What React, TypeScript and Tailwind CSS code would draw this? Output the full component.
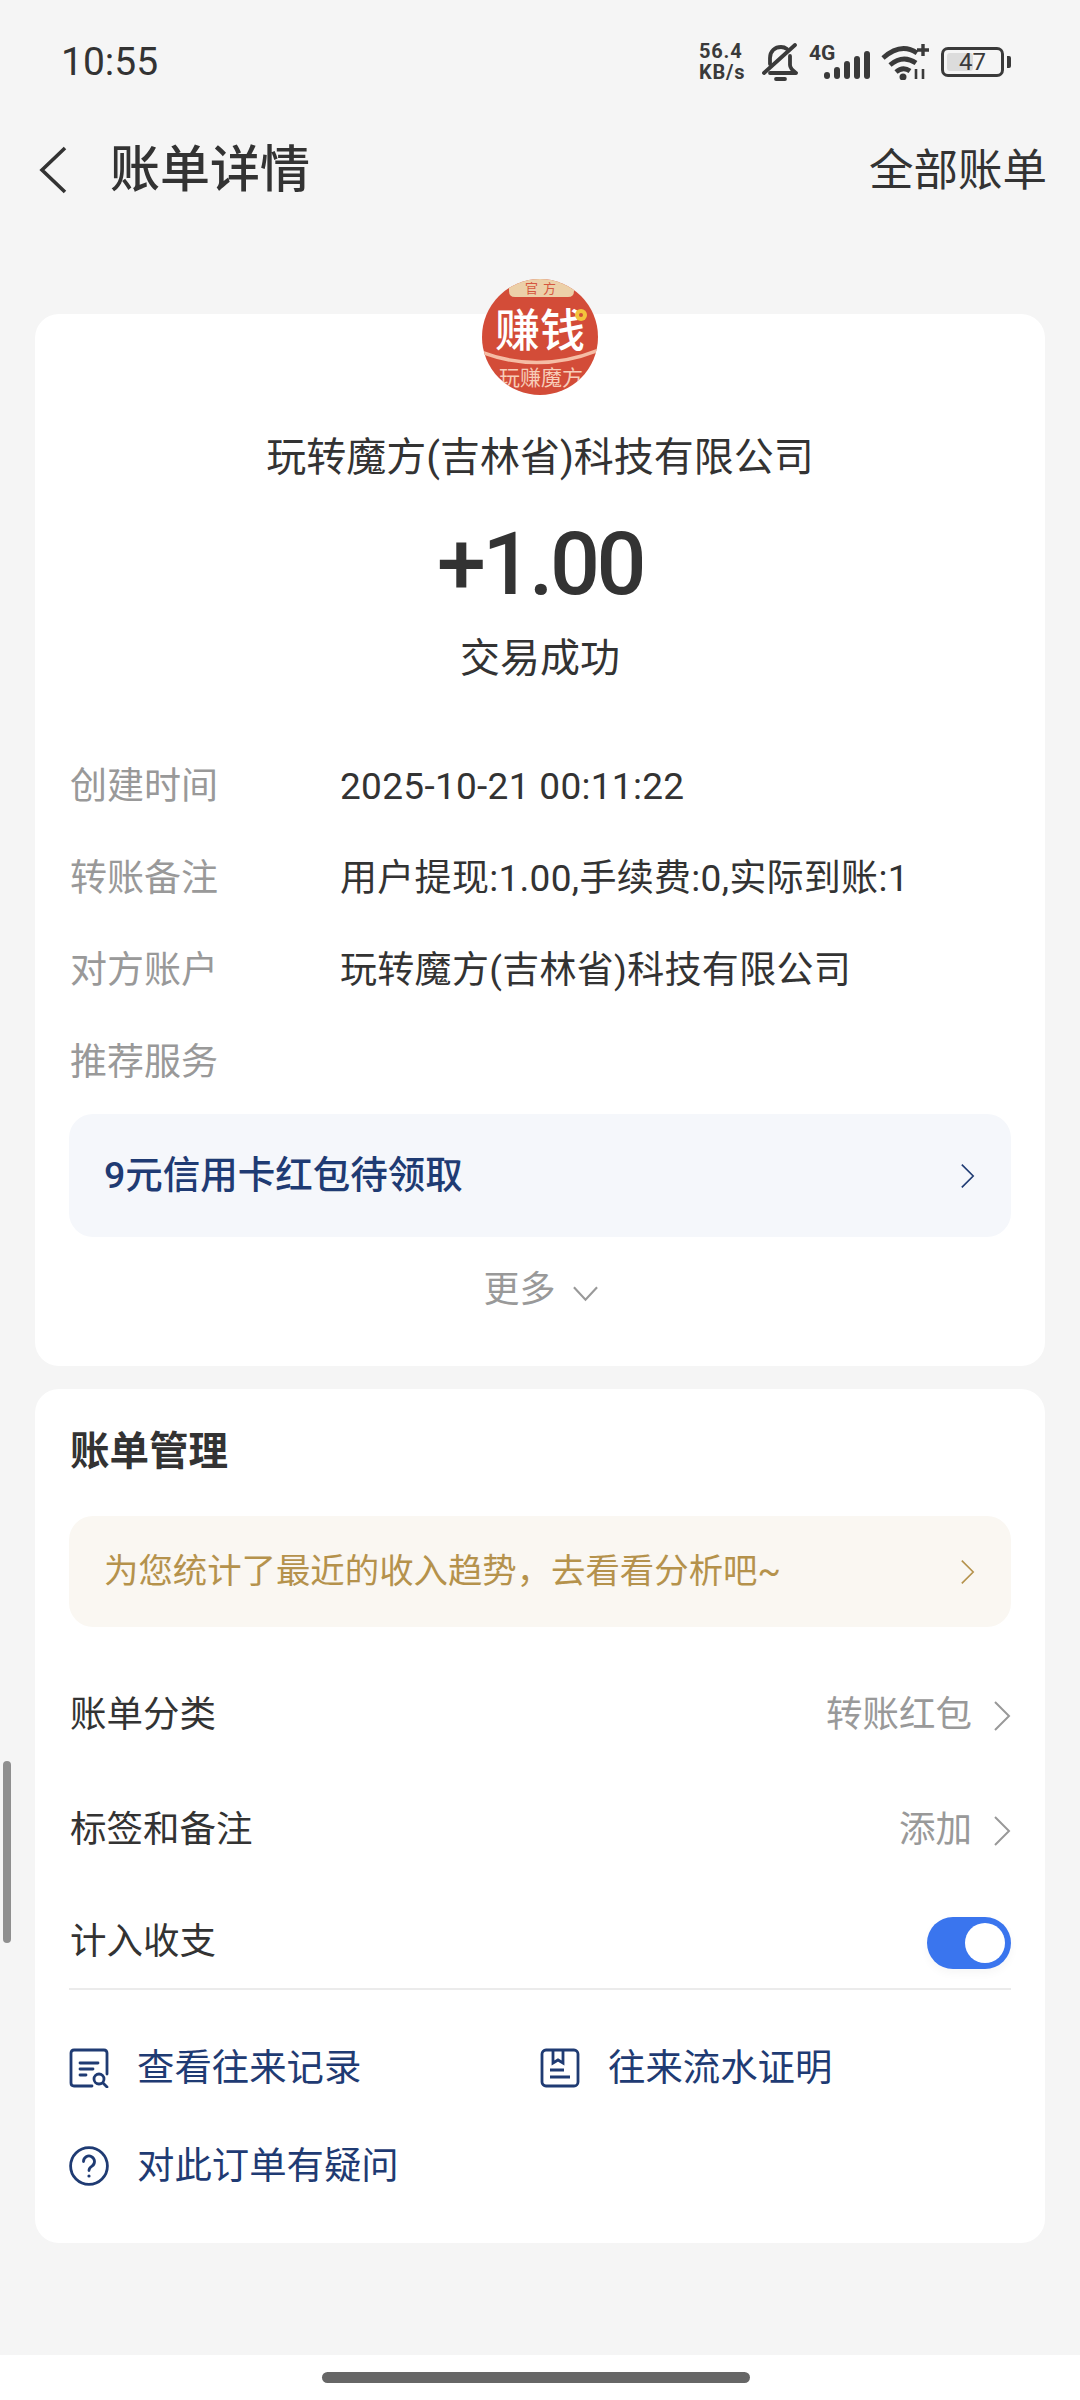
import React from "react";

const FONT = "font-['Roboto','Noto_Sans_CJK_SC',sans-serif]";

// Small chevrons shared by the list rows
function ChevronRight({ className }: { className?: string }) {
  return (
    <svg viewBox="0 0 18 32" className={className} fill="none" stroke="currentColor" strokeWidth={2}>
      <path d="M2 2l14 14L2 30" />
    </svg>
  );
}

function NetSpeed() {
  return (
    <div className="flex w-[52px] flex-col text-[20px] font-bold leading-[21px] tracking-[0.8px] text-[#3a3a3a]">
      <span>56.4</span>
      <span>KB/s</span>
    </div>
  );
}

function MutedBell() {
  return (
    <svg viewBox="0 0 36 38" className="h-[38px] w-[36px]" fill="none" stroke="#3a3a3a" strokeWidth={3.8} strokeLinecap="round" strokeLinejoin="round">
      <path d="M8 21V15C8 8 13 4 19 4c2 0 4 .5 6 2" />
      <path d="M28 13v9c0 3 2 5 6 8H8" />
      <path d="M2 30L33 2" />
      <path d="M14 36h9" />
    </svg>
  );
}

function Signal() {
  return (
    <div className="relative h-[34px] w-[61px]">
      <span className="absolute left-0 top-[-2px] text-[21px] font-bold leading-[20px] text-[#3a3a3a]">4G</span>
      <svg viewBox="0 0 46 28" className="absolute bottom-0 right-0 h-[28px] w-[46px]" fill="#3a3a3a">
        <rect x="0" y="21" width="6" height="7" rx="3" />
        <rect x="10" y="16" width="6" height="12" rx="3" />
        <rect x="20" y="10" width="6" height="18" rx="3" />
        <rect x="30" y="5" width="6" height="23" rx="3" />
        <rect x="40" y="0" width="6" height="28" rx="3" />
      </svg>
    </div>
  );
}

function Wifi() {
  return (
    <svg viewBox="0 0 49 36" className="h-[36px] w-[49px]" fill="none" stroke="#3a3a3a" strokeWidth={4.8}>
      <path d="M2 14Q20 -2 36 9" />
      <path d="M9 21Q22 10 35 19" />
      <path d="M15 28Q22 22 29 27" />
      <circle cx="22" cy="33" r="3.5" fill="#3a3a3a" stroke="none" />
      <path d="M42 0v12M36 6h12" strokeWidth={3.4} />
      <path d="M35 25v10M42 25v10" strokeWidth={2.6} />
    </svg>
  );
}

function Battery() {
  return (
    <div className="flex items-center">
      <div className="relative flex h-[30px] w-[63px] items-center justify-center overflow-hidden rounded-[7px] border-[3px] border-[#3a3a3a] p-[2px]">
        <div className="absolute bottom-[3px] left-[3px] top-[3px] w-[26px] rounded-[3px] bg-[#dcdcdc]" />
        <span className="relative text-[24px] leading-none text-[#3a3a3a]">47</span>
      </div>
      <div className="ml-[3px] h-[12px] w-[4px] rounded-r-[2px] bg-[#3a3a3a]" />
    </div>
  );
}

function StatusBar() {
  return (
    <div className="flex h-[124px] items-center justify-between pl-[61px] pr-[69px]">
      <span className="text-[39px] leading-none text-[#333333]">10:55</span>
      <div className="flex items-center gap-[11px]">
        <NetSpeed />
        <MutedBell />
        <Signal />
        <Wifi />
        <Battery />
      </div>
    </div>
  );
}

function Logo() {
  const cjk = "'Noto Sans CJK SC', sans-serif";
  return (
    <svg viewBox="0 0 118 118" className="relative -mt-[36px] h-[118px] w-[118px]">
      <defs>
        <clipPath id="logo-disc">
          <circle cx="59" cy="59" r="58" />
        </clipPath>
      </defs>
      <g clipPath="url(#logo-disc)">
        <rect width="118" height="118" fill="#d34c38" />
        <path d="M28 0h65v13q0 6-6 6H34q-6 0-6-6z" fill="#ecd0a8" />
        <text x="62" y="15" textAnchor="middle" fontSize="13" letterSpacing="5" fill="#d5573f" fontFamily={cjk}>官方</text>
        <text x="59" y="69" textAnchor="middle" fontSize="45" fontWeight="500" fill="#fff" fontFamily={cjk}>赚钱</text>
        <circle cx="100" cy="37" r="6" fill="#f3c33c" />
        <circle cx="100" cy="37" r="2" fill="#d34c38" />
        <path d="M0 74q58 22 118-2" fill="none" stroke="#f5bda5" strokeWidth="3.5" />
        <text x="60" y="107" textAnchor="middle" fontSize="21" fill="#f7cdb8" fontFamily={cjk}>玩赚魔方</text>
      </g>
    </svg>
  );
}

function InfoRow({ label, value }: { label: string; value?: string }) {
  return (
    <div className="flex h-[92px] items-center text-[37px]">
      <span className="w-[271px] pl-[1px] text-[#999999]">{label}</span>
      {value && <span className="tracking-[0.3px] text-[#333333]">{value}</span>}
    </div>
  );
}

function ManageRow({ label, value, className }: { label: string; value: string; className?: string }) {
  return (
    <div className={`flex h-[115px] items-center justify-between pl-[1px] text-[36.5px] ${className ?? ""}`}>
      <span className="text-[#333333]">{label}</span>
      <span className="flex items-center text-[#999999]">
        {value}
        <ChevronRight className="ml-[21px] h-[32px] w-[18px] text-[#999999]" />
      </span>
    </div>
  );
}

function LinkItem({ icon, label, className }: { icon: React.ReactNode; label: string; className?: string }) {
  return (
    <div className={`flex h-[98px] items-center gap-[28px] text-[37.4px] text-[#1f3b73] ${className ?? ""}`}>
      {icon}
      <span>{label}</span>
    </div>
  );
}

function RecordsIcon() {
  return (
    <svg viewBox="0 0 40 40" className="h-[40px] w-[40px]" fill="none" stroke="#1f3b73" strokeWidth={2.8} strokeLinecap="round">
      <path d="M38 26V5q0-3-3-3H5Q2 2 2 5v30q0 3 3 3h18" />
      <path d="M11 15h18M11 21h13M11 27h6" />
      <circle cx="30" cy="31" r="5" />
      <path d="M34 35l4 4" />
    </svg>
  );
}

function ProofIcon() {
  return (
    <svg viewBox="0 0 40 40" className="h-[40px] w-[40px]" fill="none" stroke="#1f3b73" strokeWidth={2.8}>
      <rect x="2" y="2" width="36" height="36" rx="4" />
      <path d="M13 2v13l5-3 5 3V2" />
      <path d="M10 22h14M10 29h20" />
    </svg>
  );
}

function QuestionIcon() {
  return (
    <svg viewBox="0 0 40 40" className="h-[40px] w-[40px]" fill="none" stroke="#1f3b73" strokeWidth={2.8} strokeLinecap="round">
      <circle cx="20" cy="20" r="18.4" />
      <path d="M14.5 15.5a5.5 5.5 0 1 1 8.5 4.6c-2 1.3-3 2.4-3 4.4" />
      <circle cx="20" cy="30" r="1.6" fill="#1f3b73" stroke="none" />
    </svg>
  );
}

export default function App() {
  return (
    <div className={`relative flex h-[2400px] w-[1080px] flex-col overflow-hidden bg-[#f5f5f5] ${FONT}`}>
      <StatusBar />

      <header className="flex h-[92px] items-center justify-between pl-[39px] pr-[33px]">
        <div className="flex items-center gap-[43px]">
          <svg viewBox="0 0 28 48" className="h-[48px] w-[28px]" fill="none" stroke="#333333" strokeWidth={3.6}>
            <path d="M26 2L3 24l23 22" />
          </svg>
          <h1 className="text-[50px] font-medium leading-none text-[#333333]">账单详情</h1>
        </div>
        <span className="mt-[2px] text-[44.5px] leading-none text-[#333333]">全部账单</span>
      </header>

      <main className="mt-[98px] flex flex-col gap-[23px] px-[35px]">
        <section className="flex flex-col items-center rounded-[24px] bg-white px-[34px] pb-[46px]">
          <Logo />
          <div className="mt-[34px] flex h-[56px] items-center text-[40px] text-[#333333]">玩转魔方(吉林省)科技有限公司</div>
          <div className="mt-[28px] flex h-[100px] items-center text-[88px] font-medium tracking-[-3.5px] text-[#333333]">+1.00</div>
          <div className="mt-[20px] flex h-[50px] items-center text-[40px] text-[#333333]">交易成功</div>

          <div className="mt-[57px] w-full">
            <InfoRow label="创建时间" value="2025-10-21 00:11:22" />
            <InfoRow label="转账备注" value="用户提现:1.00,手续费:0,实际到账:1" />
            <InfoRow label="对方账户" value="玩转魔方(吉林省)科技有限公司" />
            <InfoRow label="推荐服务" />
          </div>

          <div className="mt-[5px] flex h-[123px] w-full items-center justify-between rounded-[24px] bg-[#f5f7fb] pl-[35px] pr-[36px]">
            <span className="text-[37.5px] font-medium text-[#1f3b73]">9元信用卡红包待领取</span>
            <ChevronRight className="h-[26px] w-[15px] text-[#1f3b73]" />
          </div>

          <div className="mt-[23px] flex h-[60px] items-center gap-[16px] pl-[2px] text-[36px] text-[#999999]">
            更多
            <svg viewBox="0 0 28 18" className="mt-[8px] h-[18px] w-[27px]" fill="none" stroke="currentColor" strokeWidth={2.2}>
              <path d="M2 2l12 13L26 2" />
            </svg>
          </div>
        </section>

        <section className="flex flex-col rounded-[24px] bg-white px-[34px] pb-[28px] pt-[33px]">
          <h2 className="flex h-[60px] items-center pl-[1px] text-[39.5px] font-bold text-[#333333]">账单管理</h2>

          <div className="mt-[34px] flex h-[111px] items-center justify-between rounded-[24px] bg-[#faf7f2] pl-[35px] pr-[36px]">
            <span className="text-[34.4px] text-[#b5924c]">为您统计了最近的收入趋势，去看看分析吧~</span>
            <ChevronRight className="h-[26px] w-[15px] text-[#b5924c]" />
          </div>

          <ManageRow label="账单分类" value="转账红包" className="mt-[31px]" />
          <ManageRow label="标签和备注" value="添加" />

          <div className="flex h-[102px] items-center justify-between border-b-2 border-[#ebebeb] pl-[1px] pt-[9px] text-[36.5px] text-[#333333]">
            计入收支
            <div className="flex h-[52px] w-[84px] items-center justify-end rounded-full bg-[#3a75ee] pr-[6px] shadow-[0_4px_10px_rgba(0,0,0,0.04)]">
              <div className="h-[40px] w-[40px] rounded-full bg-white" />
            </div>
          </div>

          <div className="mt-[29px] grid grid-cols-[471px_1fr]">
            <LinkItem icon={<RecordsIcon />} label="查看往来记录" />
            <LinkItem icon={<ProofIcon />} label="往来流水证明" />
            <LinkItem icon={<QuestionIcon />} label="对此订单有疑问" />
          </div>
        </section>
      </main>

      {/* page scroll indicator */}
      <div className="absolute left-[3px] top-[1761px] h-[182px] w-[8px] rounded-full bg-[#8f8f8f]" />

      <footer className="mt-auto flex h-[45px] justify-center bg-white pr-[9px] pt-[17px]">
        <div className="h-[11px] w-[428px] rounded-full bg-[#666666]" />
      </footer>
    </div>
  );
}
